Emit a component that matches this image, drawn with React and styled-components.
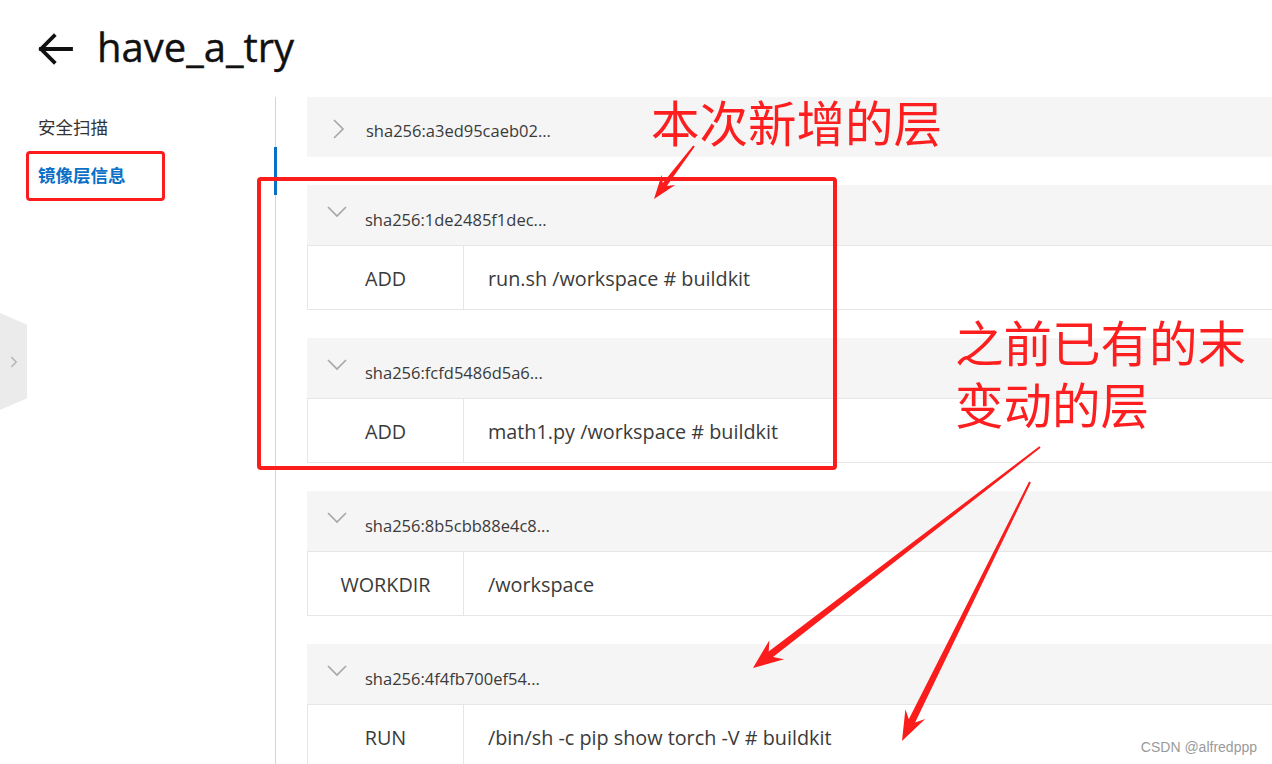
import React from 'react'
import styled, { createGlobalStyle, css } from 'styled-components'
import { ChevronRight } from 'lucide-react'

const GlobalStyle = createGlobalStyle`
  html, body {
    margin: 0;
    padding: 0;
    background: #fff;
  }
  body {
    font-family: "Open Sans", "Noto Sans CJK SC", sans-serif;
    color: #333;
    overflow: hidden;
  }
`

const Page = styled.div`
  position: relative;
  width: 1272px;
  height: 764px;
  overflow: hidden;
  background: #fff;
`

const TitleBar = styled.header`
  display: flex;
  align-items: center;
  gap: 24px;
  height: 97px;
  padding-left: 37px;
  box-sizing: border-box;
`

const BackButton = styled.button`
  display: flex;
  align-items: center;
  justify-content: center;
  border: 0;
  padding: 0;
  background: none;
  color: #111;
`

const Title = styled.h1`
  margin: 0;
  font-family: "Open Sans", sans-serif;
  font-size: 40px;
  font-weight: 400;
  color: #111;
  padding-bottom: 4px;
  -webkit-text-stroke: 0.4px #111;
`

const Body = styled.div`
  display: grid;
  grid-template-columns: 276px 1fr;
  height: 667px;
`

const Sidebar = styled.nav`
  border-right: 1px solid #d4d4d4;
  padding-top: 5px;
`

const NavItem = styled.div`
  position: relative;
  height: 48px;
  display: flex;
  align-items: center;
  padding-left: 38px;
  font-family: "Noto Sans CJK SC", sans-serif;
  font-size: 17.5px;
  color: #333;

  ${(p) =>
    p.$active &&
    css`
      color: #0b6fc6;
      font-weight: 700;
      &::after {
        content: '';
        position: absolute;
        right: -2px;
        top: -3px;
        width: 3px;
        height: 48px;
        background: #0b6fc6;
      }
    `}
`

const Content = styled.main`
  padding-left: 31px;
  overflow: hidden;
`

const Layer = styled.section`
  margin-right: -40px;
  margin-bottom: 28px;
`

const LayerHeader = styled.div`
  display: flex;
  align-items: center;
  height: 60px;
  background: #f5f5f5;
  padding-left: ${(p) => (p.$open ? '20px' : '26px')};
  gap: ${(p) => (p.$open ? '18px' : '21px')};
  color: #a8a8a8;

  svg {
    margin-top: ${(p) => (p.$open ? '-6px' : '4px')};
  }
`

const Digest = styled.span`
  font-size: 16.5px;
  color: #3a3a3a;
  padding-top: ${(p) => (p.$open ? '8px' : '6px')};
`

const Row = styled.div`
  display: grid;
  grid-template-columns: 156px 1fr;
  height: 65px;
  border: 1px solid #e6e6e6;
  box-sizing: border-box;
  font-size: 19.8px;
  color: #3a3a3a;
`

const Instr = styled.div`
  display: flex;
  align-items: center;
  justify-content: center;
  border-right: 1px solid #e6e6e6;
  padding-top: 2px;
`

const Args = styled.div`
  display: flex;
  align-items: center;
  padding-left: 24px;
  padding-top: 2px;
`

const DrawerTab = styled.div`
  position: absolute;
  left: 0;
  top: 313px;
  width: 27px;
  height: 97px;
  background: #ebebeb;
  clip-path: polygon(0 0, 100% 12%, 100% 88%, 0 100%);
  display: flex;
  align-items: center;
  justify-content: center;
  color: #b3b3b3;
`

const Overlay = styled.svg`
  position: absolute;
  inset: 0;
  pointer-events: none;
`

const Note = styled.div`
  position: absolute;
  left: ${(p) => p.$x}px;
  top: ${(p) => p.$y}px;
  font-family: "Noto Sans CJK SC", sans-serif;
  font-size: 48.5px;
  line-height: 50px;
  color: #fd1f1f;
  white-space: nowrap;
  pointer-events: none;
`

const Frame = styled.div`
  position: absolute;
  left: ${(p) => p.$x}px;
  top: ${(p) => p.$y}px;
  width: ${(p) => p.$w}px;
  height: ${(p) => p.$h}px;
  border: ${(p) => p.$b}px solid #fb1c1c;
  border-radius: 4px;
  box-sizing: border-box;
  pointer-events: none;
`

const Watermark = styled.div`
  position: absolute;
  right: 15px;
  bottom: 9px;
  font-family: "Liberation Sans", Arial, sans-serif;
  font-size: 14px;
  color: #9a9a9a;
`

const layers = [
  { digest: 'sha256:a3ed95caeb02...', open: false },
  { digest: 'sha256:1de2485f1dec...', open: true, cmd: 'ADD', args: 'run.sh /workspace # buildkit' },
  { digest: 'sha256:fcfd5486d5a6...', open: true, cmd: 'ADD', args: 'math1.py /workspace # buildkit' },
  { digest: 'sha256:8b5cbb88e4c8...', open: true, cmd: 'WORKDIR', args: '/workspace' },
  { digest: 'sha256:4f4fb700ef54...', open: true, cmd: 'RUN', args: '/bin/sh -c pip show torch -V # buildkit' },
]

const Chevron = ({ open }) =>
  open ? (
    <svg width="20" height="12" viewBox="0 0 20 12" fill="none" stroke="currentColor" strokeWidth="1.7">
      <polyline points="1,1 10,10 19,1" />
    </svg>
  ) : (
    <svg width="12" height="20" viewBox="0 0 12 20" fill="none" stroke="currentColor" strokeWidth="1.7">
      <polyline points="1,1 10,10 1,19" />
    </svg>
  )

// tapered arrow polygon from tail to tip
function arrow(x1, y1, x2, y2, tw, sw, hl, hw) {
  const dx = x2 - x1
  const dy = y2 - y1
  const len = Math.hypot(dx, dy)
  const ux = dx / len
  const uy = dy / len
  const nx = -uy
  const ny = ux
  const bx = x2 - ux * hl
  const by = y2 - uy * hl
  const cx = x2 - ux * (hl * 0.75)
  const cy = y2 - uy * (hl * 0.75)
  const pts = [
    [x1 + nx * tw / 2, y1 + ny * tw / 2],
    [cx + nx * sw / 2, cy + ny * sw / 2],
    [bx + nx * hw / 2, by + ny * hw / 2],
    [x2, y2],
    [bx - nx * hw / 2, by - ny * hw / 2],
    [cx - nx * sw / 2, cy - ny * sw / 2],
    [x1 - nx * tw / 2, y1 - ny * tw / 2],
  ]
  return pts.map((p) => p.map((v) => v.toFixed(1)).join(',')).join(' ')
}

export default function App() {
  return (
    <Page>
      <GlobalStyle />
      <TitleBar>
        <BackButton>
          <svg width="36" height="32" viewBox="0 0 36 32" fill="none" stroke="currentColor" strokeWidth="3.8" strokeLinecap="square">
            <line x1="4" y1="16" x2="34" y2="16" />
            <polyline points="17,3 4,16 17,29" strokeLinejoin="miter" />
          </svg>
        </BackButton>
        <Title>have_a_try</Title>
      </TitleBar>

      <Body>
        <Sidebar>
          <NavItem>安全扫描</NavItem>
          <NavItem $active>镜像层信息</NavItem>
        </Sidebar>
        <Content>
          {layers.map((l) => (
            <Layer key={l.digest}>
              <LayerHeader $open={l.open}>
                <Chevron open={l.open} />
                <Digest $open={l.open}>{l.digest}</Digest>
              </LayerHeader>
              {l.open && (
                <Row>
                  <Instr>{l.cmd}</Instr>
                  <Args>{l.args}</Args>
                </Row>
              )}
            </Layer>
          ))}
        </Content>
      </Body>

      <DrawerTab>
        <ChevronRight size={18} strokeWidth={2} />
      </DrawerTab>

      <Frame $x={26} $y={151} $w={139} $h={50} $b={3} />
      <Frame $x={257} $y={177} $w={580} $h={293} $b={4} />

      <Note $x={651} $y={96}>本次新增的层</Note>
      <Note $x={955} $y={316}>之前已有的末</Note>
      <Note $x={955} $y={378}>变动的层</Note>

      <Overlay width="1272" height="764" viewBox="0 0 1272 764">
        <polygon points={arrow(694, 146, 654, 199, 2, 5, 24, 17)} fill="#fb1c1c" />
        <polygon points={arrow(1040, 447, 753, 668, 2, 7, 30, 24)} fill="#fb1c1c" />
        <polygon points={arrow(1030, 482, 902, 741, 2, 7, 30, 22)} fill="#fb1c1c" />
      </Overlay>

      <Watermark>CSDN @alfredppp</Watermark>
    </Page>
  )
}
